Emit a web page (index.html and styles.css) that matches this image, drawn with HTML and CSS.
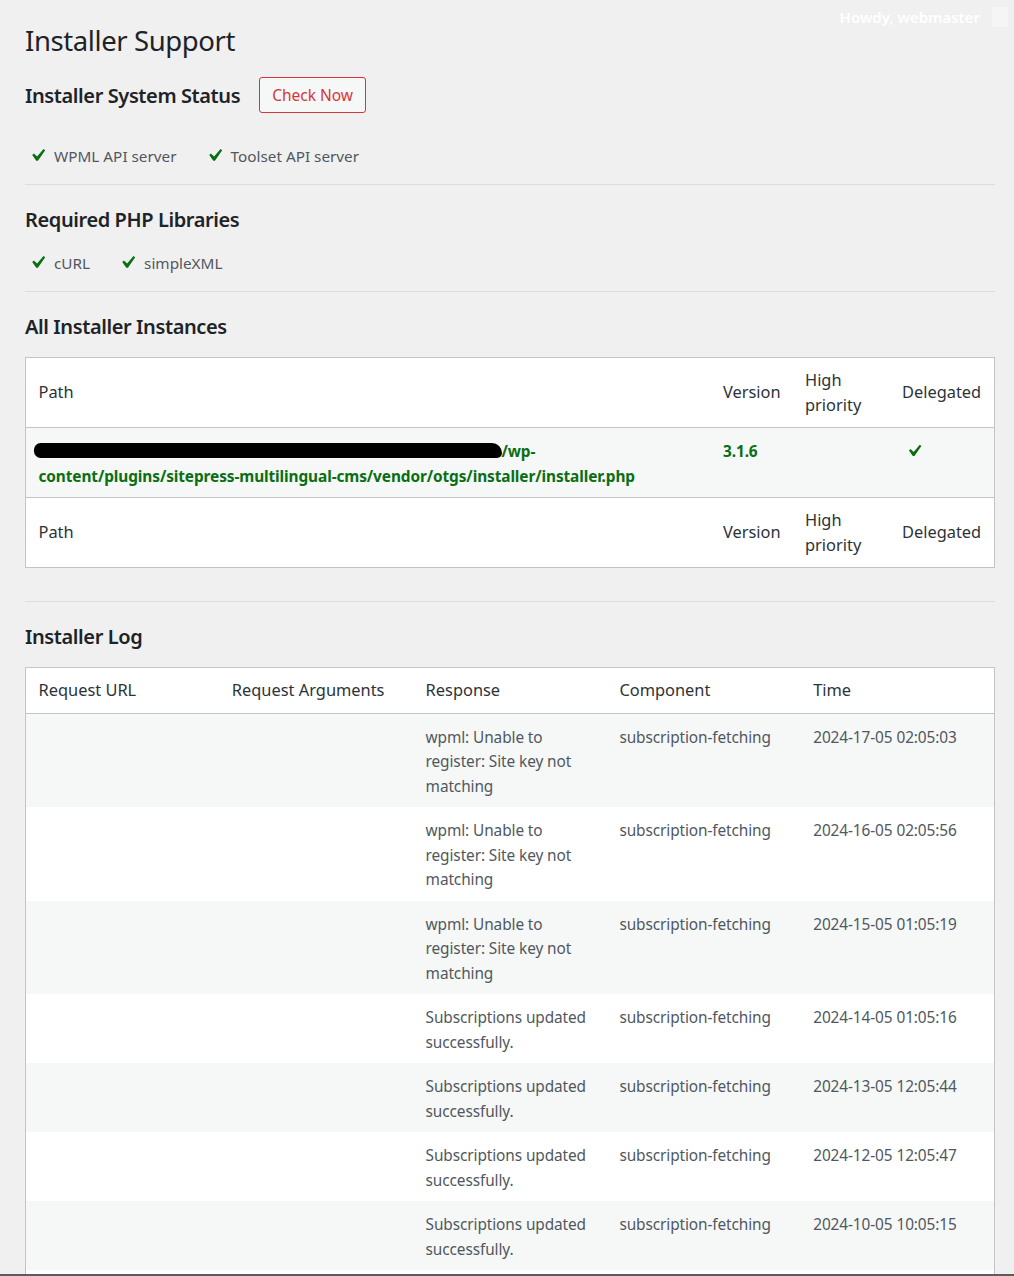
FILE: index.html
```html
<!DOCTYPE html>
<html lang="en">
<head>
    <meta charset="UTF-8">
    <title>Installer Support</title>
    <link rel="stylesheet" href="styles.css">
</head>
<body>

    <div class="adminbar">
        <span class="howdy">Howdy, webmaster</span>
        <span class="avatar"></span>
    </div>

    <div class="wrap">
        <h1>Installer Support</h1>

        <div class="status-head">
            <h2>Installer System Status</h2>
            <button class="check-btn">Check Now</button>
        </div>
        <ul class="checks first">
            <li><svg viewBox="0 0 20 20"><path d="M14.83 4.89l1.34.94-5.81 8.38H9.02L5.78 9.67l1.34-1.25 2.57 2.4z"/></svg>WPML API server</li>
            <li><svg viewBox="0 0 20 20"><path d="M14.83 4.89l1.34.94-5.81 8.38H9.02L5.78 9.67l1.34-1.25 2.57 2.4z"/></svg>Toolset API server</li>
        </ul>
        <hr>

        <h2>Required PHP Libraries</h2>
        <ul class="checks">
            <li><svg viewBox="0 0 20 20"><path d="M14.83 4.89l1.34.94-5.81 8.38H9.02L5.78 9.67l1.34-1.25 2.57 2.4z"/></svg>cURL</li>
            <li><svg viewBox="0 0 20 20"><path d="M14.83 4.89l1.34.94-5.81 8.38H9.02L5.78 9.67l1.34-1.25 2.57 2.4z"/></svg>simpleXML</li>
        </ul>
        <hr>

        <h2>All Installer Instances</h2>
        <table class="widefat instances">
            <colgroup>
                <col>
                <col class="col-version">
                <col class="col-priority">
                <col class="col-delegated">
            </colgroup>
            <thead>
                <tr><th>Path</th><th>Version</th><th>High priority</th><th>Delegated</th></tr>
            </thead>
            <tbody>
                <tr class="alt">
                    <td class="path"><span class="redacted"></span>/wp-<br>content/plugins/sitepress-multilingual-cms/vendor/otgs/installer/installer.php</td>
                    <td class="path">3.1.6</td>
                    <td></td>
                    <td><svg class="yes" viewBox="0 0 20 20"><path d="M14.83 4.89l1.34.94-5.81 8.38H9.02L5.78 9.67l1.34-1.25 2.57 2.4z"/></svg></td>
                </tr>
            </tbody>
            <tfoot>
                <tr><th>Path</th><th>Version</th><th>High priority</th><th>Delegated</th></tr>
            </tfoot>
        </table>

        <hr class="log-sep">

        <h2>Installer Log</h2>
        <table class="widefat log">
            <thead>
                <tr><th>Request URL</th><th>Request Arguments</th><th>Response</th><th>Component</th><th>Time</th></tr>
            </thead>
            <tbody>
                <tr class="alt"><td></td><td></td><td>wpml: Unable to register: Site key not matching</td><td>subscription-fetching</td><td>2024-17-05 02:05:03</td></tr>
                <tr><td></td><td></td><td>wpml: Unable to register: Site key not matching</td><td>subscription-fetching</td><td>2024-16-05 02:05:56</td></tr>
                <tr class="alt"><td></td><td></td><td>wpml: Unable to register: Site key not matching</td><td>subscription-fetching</td><td>2024-15-05 01:05:19</td></tr>
                <tr><td></td><td></td><td>Subscriptions updated successfully.</td><td>subscription-fetching</td><td>2024-14-05 01:05:16</td></tr>
                <tr class="alt"><td></td><td></td><td>Subscriptions updated successfully.</td><td>subscription-fetching</td><td>2024-13-05 12:05:44</td></tr>
                <tr><td></td><td></td><td>Subscriptions updated successfully.</td><td>subscription-fetching</td><td>2024-12-05 12:05:47</td></tr>
                <tr class="alt"><td></td><td></td><td>Subscriptions updated successfully.</td><td>subscription-fetching</td><td>2024-10-05 10:05:15</td></tr>
                <tr class="empty"><td></td><td></td><td></td><td></td><td></td></tr>
            </tbody>
        </table>
    </div>

</body>
</html>
```

FILE: styles.css
```css
body {
    margin: 0;
    background-color: #f0f0f1;
    color: #3c434a;
    font-family: "Noto Sans", "Open Sans", sans-serif;
}
body::after {
    content: "";
    position: fixed;
    left: 0;
    right: 0;
    bottom: 0;
    height: 2px;
    background-color: #5c5c5c;
}
.adminbar {
    position: absolute;
    top: 7px;
    right: 6px;
    display: flex;
    align-items: center;
    gap: 12px;
}
.howdy {
    color: #ffffff;
    font-size: 15px;
    font-weight: 600;
}
.avatar {
    width: 16px;
    height: 20px;
    background-color: #f5f5f5;
}
.wrap {
    padding: 22px 19px 0 25px;
}
h1 {
    margin: 0;
    font-size: 27.5px;
    font-weight: 400;
    letter-spacing: -0.4px;
    line-height: 37px;
    color: #1d2327;
}
h2 {
    margin: 21px 0 17px;
    font-size: 20px;
    font-weight: 600;
    letter-spacing: -0.4px;
    line-height: 27px;
    color: #1d2327;
}
.status-head {
    display: flex;
    align-items: center;
    gap: 19px;
    margin-top: 18px;
    height: 36px;
}
.status-head h2 {
    margin: 0;
}
.check-btn {
    height: 36px;
    padding: 0 12px;
    border: 1px solid #d63638;
    border-radius: 3px;
    background-color: #f6f7f7;
    color: #d63638;
    font-family: inherit;
    font-size: 15.5px;
    cursor: pointer;
}
.checks {
    list-style: none;
    margin: 0 0 16px;
    padding: 0;
    display: flex;
    gap: 25px;
    font-size: 15.3px;
    line-height: 24px;
    color: #50575e;
}
.checks.first {
    margin-top: 30px;
}
.checks li {
    display: flex;
    align-items: center;
}
.checks svg {
    width: 25px;
    height: 25px;
    margin-right: 4px;
    fill: #0a6e12;
}
hr {
    margin: 0;
    border: 0;
    border-top: 1px solid #dcdcde;
}
hr.log-sep {
    margin-top: 33px;
}
.widefat {
    width: 100%;
    border-collapse: collapse;
    border: 1px solid #c3c4c7;
    background-color: #ffffff;
}
.widefat th {
    padding: 10px 12.5px;
    text-align: left;
    font-weight: 400;
    font-size: 16.4px;
    line-height: 24.5px;
    color: #2c3338;
}
.widefat thead th {
    border-bottom: 1px solid #c3c4c7;
}
.widefat tfoot th {
    border-top: 1px solid #c3c4c7;
}
.widefat td {
    padding: 12px 12.5px 8px;
    vertical-align: top;
    font-size: 15.4px;
    letter-spacing: -0.1px;
    line-height: 24.5px;
    color: #50575e;
}
.widefat tr.alt td {
    background-color: #f6f7f7;
}
.widefat tr.empty td {
    height: 49px;
}
.col-version {
    width: 82px;
}
.col-priority {
    width: 97px;
}
.col-delegated {
    width: 105px;
}
.instances {
    margin-top: 1px;
    table-layout: fixed;
}
.instances td.path {
    font-weight: 700;
    color: #0a6e12;
}
.redacted {
    display: inline-block;
    width: 468px;
    height: 15px;
    margin-left: -5px;
    border-radius: 8px 12px 6px 8px;
    background-color: #000000;
    vertical-align: -1px;
}
.yes {
    width: 24px;
    height: 24px;
    margin-top: -1px;
    fill: #0a6e12;
}
.log {
    table-layout: fixed;
}
```
